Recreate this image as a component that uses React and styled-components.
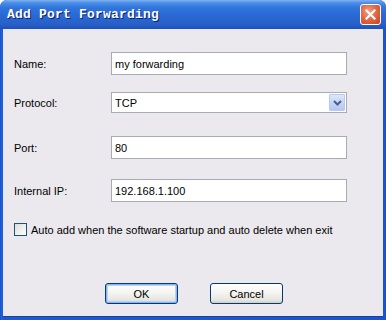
import React from "react";
import styled, { createGlobalStyle } from "styled-components";

const Global = createGlobalStyle`
  html, body { margin: 0; padding: 0; background: #ffffff; }
  body { font-family: Tahoma, "Liberation Sans", Arial, sans-serif; }
`;

const Window = styled.div`
  width: 386px;
  height: 320px;
  box-sizing: border-box;
  display: flex;
  flex-direction: column;
  background: #0a4fd0;
  border-radius: 7px 7px 0 0;
  overflow: hidden;
`;

const TitleBar = styled.div`
  height: 29px;
  flex: 0 0 29px;
  display: flex;
  align-items: center;
  justify-content: space-between;
  padding: 0 5px 0 7px;
  box-sizing: border-box;
  background: linear-gradient(
    to bottom,
    #7fb3f0 0px,
    #4a8ce6 3px,
    #2f74dc 8px,
    #2a68d3 16px,
    #2760c8 24px,
    #1d52bb 29px
  );
`;

const Title = styled.span`
  font-family: "Liberation Mono", "DejaVu Sans Mono", monospace;
  font-weight: bold;
  font-size: 13px;
  color: #ffffff;
  text-shadow: 1px 1px 0 #0a1f66;
  letter-spacing: 0.2px;
`;

const CloseButton = styled.div`
  width: 21px;
  height: 21px;
  box-sizing: border-box;
  border: 1px solid #ffffff;
  border-radius: 3px;
  background: radial-gradient(circle at 40% 35%, #f0a28a 0%, #e36a47 45%, #c8411f 100%);
  display: flex;
  align-items: center;
  justify-content: center;
`;

const Frame = styled.div`
  flex: 1;
  display: flex;
  padding: 0 3px 3px 3px;
  background: linear-gradient(to right, #0a3fc0, #2a6be0 1px, #1f5ad6 2px, #1a54d0);
`;

const Body = styled.div`
  flex: 1;
  background: #ebe9ed;
  display: flex;
  flex-direction: column;
  padding: 0 0 0 11px;
  border-bottom: 1px solid #1a3f9c;
`;

const Row = styled.div`
  display: grid;
  grid-template-columns: 97px 236px;
  align-items: center;
  margin-top: ${(p) => p.$top}px;
`;

const Label = styled.label`
  font-size: 11px;
  color: #000000;
`;

const TextBox = styled.div`
  height: ${(p) => p.$h || 23}px;
  box-sizing: border-box;
  border: 1px solid #a5acb5;
  background: #ffffff;
  display: flex;
  align-items: center;
  padding-left: 3px;
  font-size: 11px;
  color: #000000;
  position: relative;
`;

const DropButton = styled.div`
  position: absolute;
  right: 1px;
  top: 1px;
  bottom: 1px;
  width: 16px;
  box-sizing: border-box;
  border: 1px solid #b9c9ea;
  background: linear-gradient(to bottom, #dde6fb, #c2d3f7 60%, #b4c8f3);
  border-radius: 1px;
  display: flex;
  align-items: center;
  justify-content: center;
`;

const CheckRow = styled.div`
  display: flex;
  align-items: center;
  gap: 4px;
  margin-top: 21px;
  font-size: 11px;
  color: #000000;
`;

const Check = styled.div`
  width: 13px;
  height: 13px;
  box-sizing: border-box;
  border: 1px solid #1c5180;
  background: linear-gradient(135deg, #dcdcd7, #ffffff);
`;

const Buttons = styled.div`
  display: flex;
  justify-content: center;
  gap: 32px;
  margin-top: 47px;
  margin-left: -9px;
`;

const Button = styled.div`
  width: 73px;
  height: 21px;
  box-sizing: border-box;
  border: 1px solid #003c74;
  border-radius: 3px;
  background: linear-gradient(to bottom, #ffffff 0%, #f3f3ef 50%, #e6e5de 85%, #d6d0c5 100%);
  box-shadow: ${(p) => (p.$focus ? "inset 0 0 0 1px #8cb4f2, inset 0 0 0 2px #b9d1fa" : "inset 0 -1px 0 #d6d0c5")};
  display: flex;
  align-items: center;
  justify-content: center;
  font-size: 11px;
  color: #000000;
`;

export default function App() {
  return (
    <>
      <Global />
      <Window>
        <TitleBar>
          <Title>Add Port Forwarding</Title>
          <CloseButton>
            <svg width="11" height="11" viewBox="0 0 11 11">
              <path d="M1.5 1.5 L9.5 9.5 M9.5 1.5 L1.5 9.5" stroke="#ffffff" strokeWidth="2.2" strokeLinecap="square" />
            </svg>
          </CloseButton>
        </TitleBar>
        <Frame>
          <Body>
            <Row $top={23}>
              <Label>Name:</Label>
              <TextBox>my forwarding</TextBox>
            </Row>
            <Row $top={17}>
              <Label>Protocol:</Label>
              <TextBox $h={21}>
                TCP
                <DropButton>
                  <svg width="9" height="6" viewBox="0 0 9 6">
                    <path d="M1 1 L4.5 4.5 L8 1" stroke="#4d6185" strokeWidth="2" fill="none" />
                  </svg>
                </DropButton>
              </TextBox>
            </Row>
            <Row $top={23}>
              <Label>Port:</Label>
              <TextBox>80</TextBox>
            </Row>
            <Row $top={20}>
              <Label>Internal IP:</Label>
              <TextBox>192.168.1.100</TextBox>
            </Row>
            <CheckRow>
              <Check />
              <span>Auto add when the software startup and auto delete when exit</span>
            </CheckRow>
            <Buttons>
              <Button $focus>OK</Button>
              <Button>Cancel</Button>
            </Buttons>
          </Body>
        </Frame>
      </Window>
    </>
  );
}
